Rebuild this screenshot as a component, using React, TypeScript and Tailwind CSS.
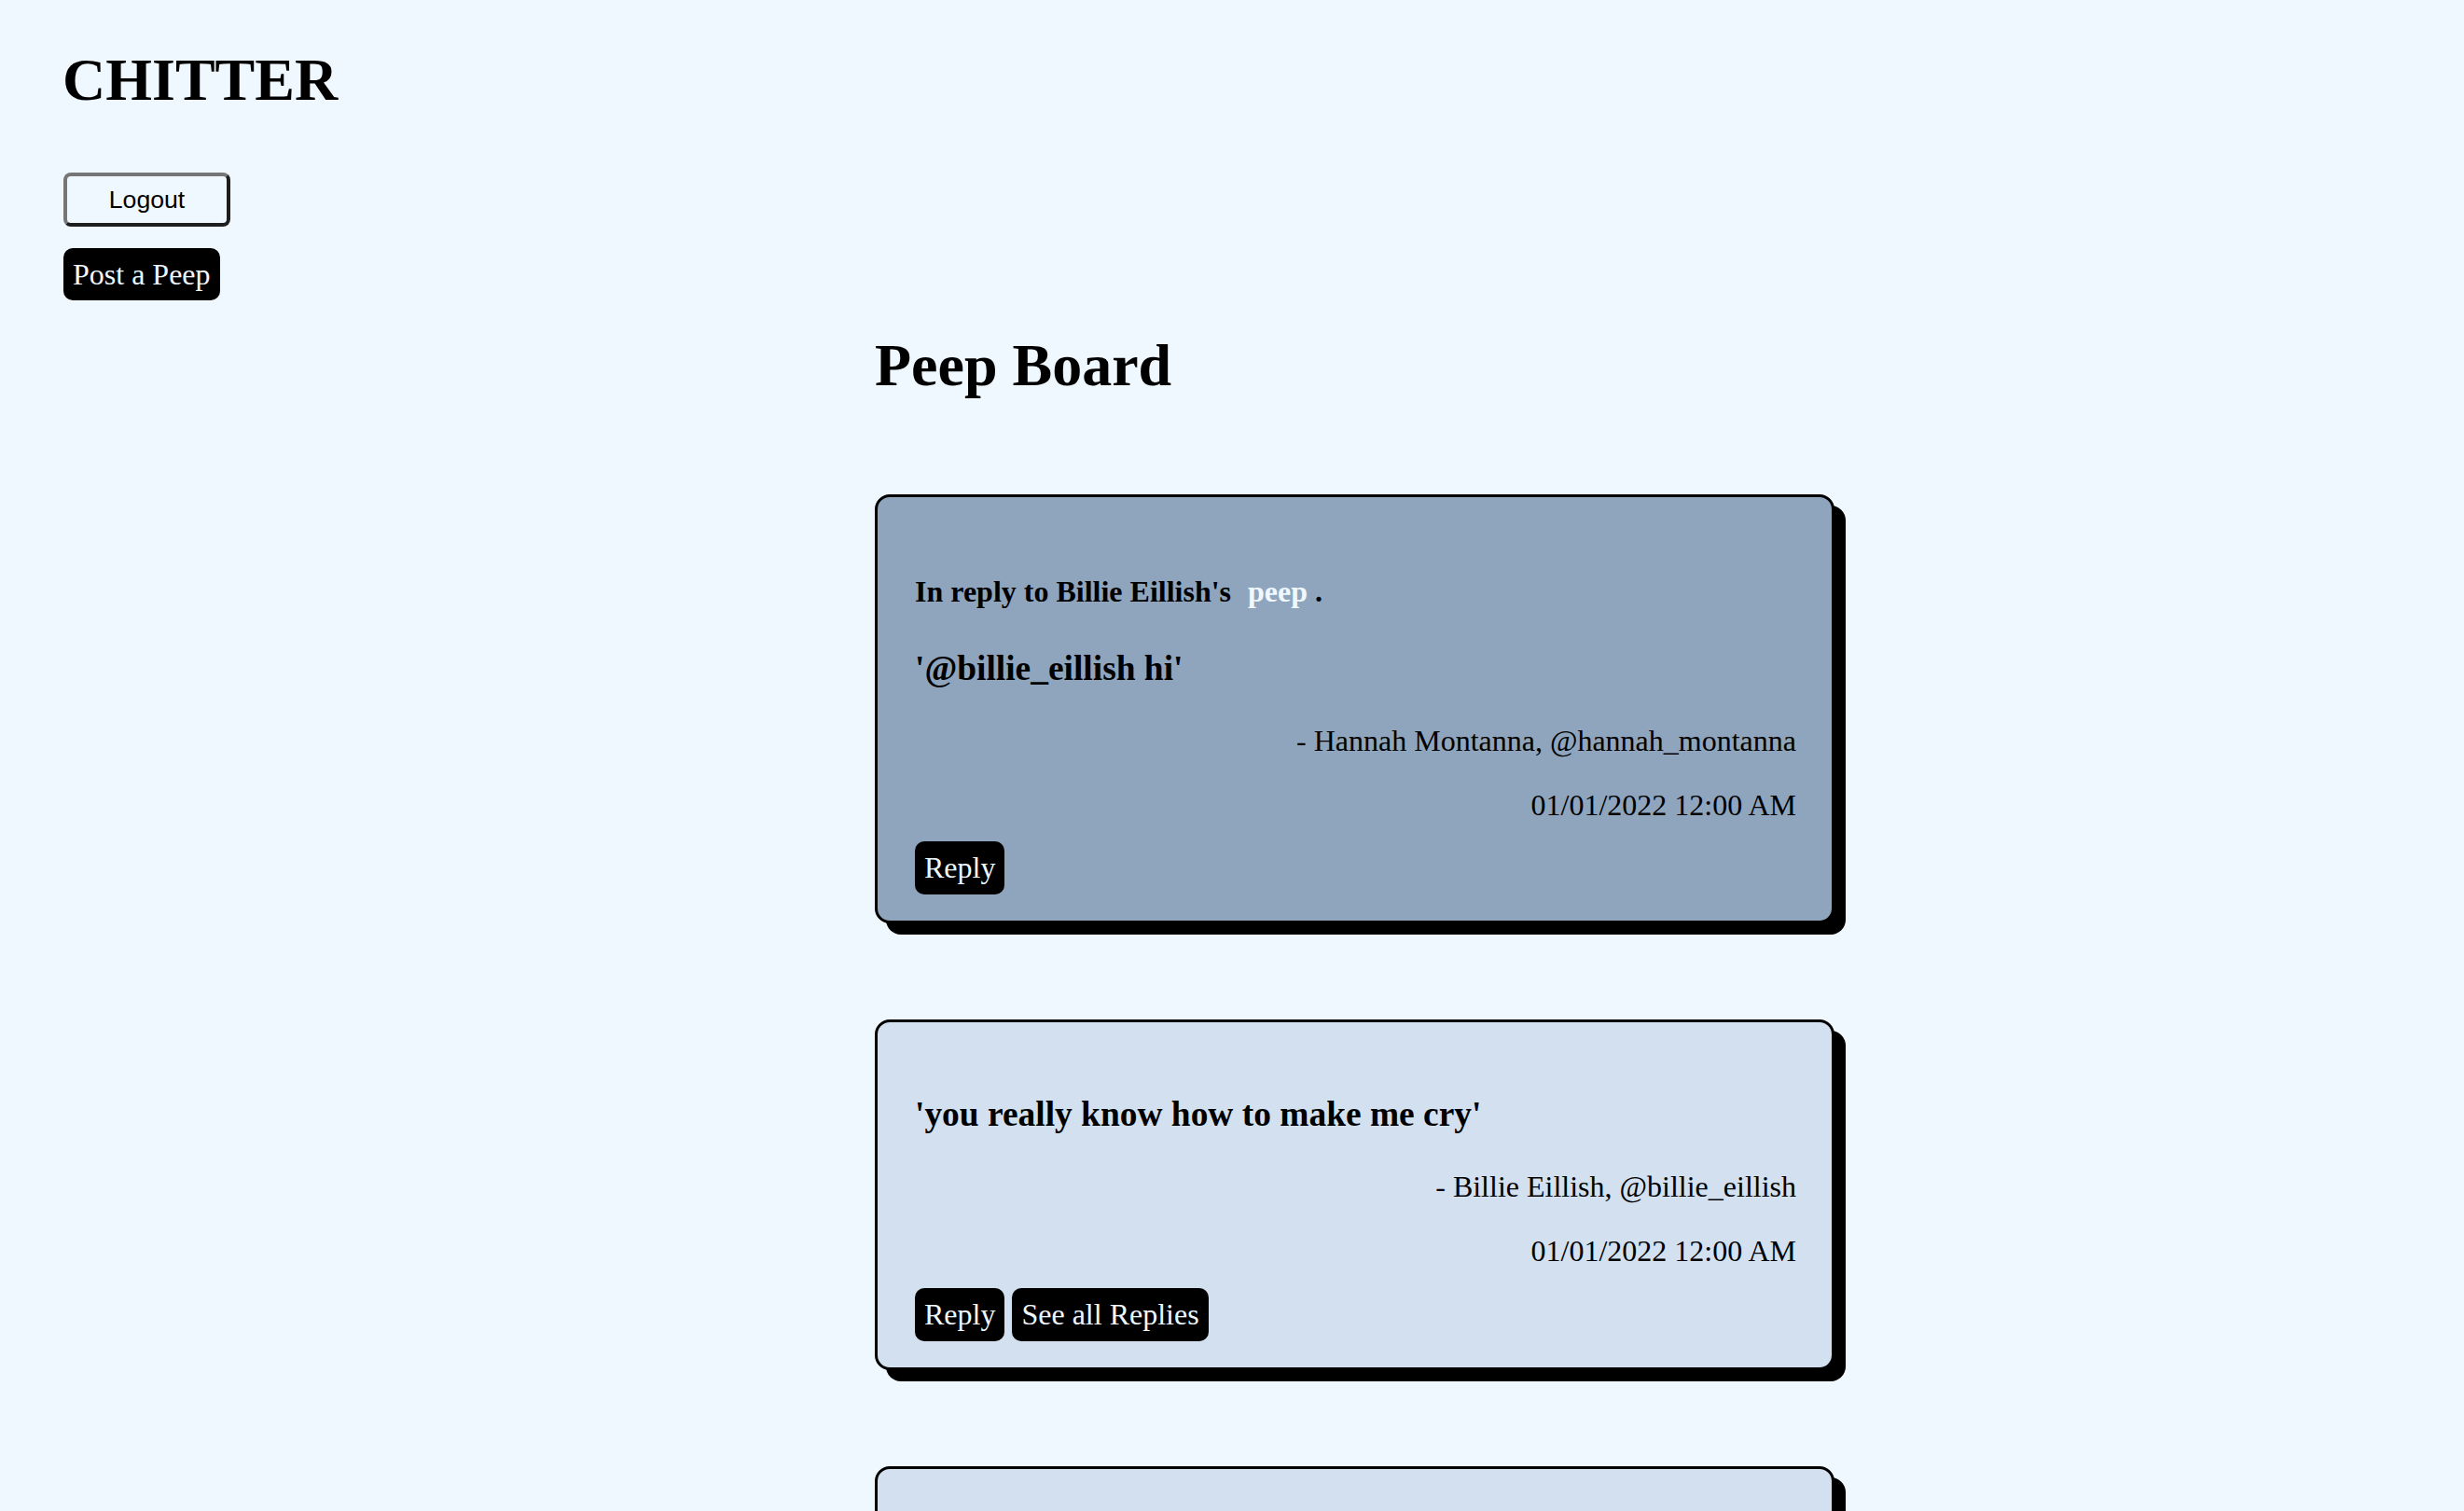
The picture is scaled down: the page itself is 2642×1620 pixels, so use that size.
import React from "react";

type Peep = {
  id: number;
  replyTo?: string;
  body: string;
  author: string;
  handle: string;
  date: string;
  hasReplies: boolean;
};

const peeps: Peep[] = [
  {
    id: 3,
    replyTo: "Billie Eillish",
    body: "@billie_eillish hi",
    author: "Hannah Montanna",
    handle: "hannah_montanna",
    date: "01/01/2022 12:00 AM",
    hasReplies: false,
  },
  {
    id: 2,
    body: "you really know how to make me cry",
    author: "Billie Eillish",
    handle: "billie_eillish",
    date: "01/01/2022 12:00 AM",
    hasReplies: true,
  },
  {
    id: 1,
    body: "when the party's over",
    author: "Billie Eillish",
    handle: "billie_eillish",
    date: "01/01/2022 12:00 AM",
    hasReplies: false,
  },
];

const blackButton =
  "bg-black text-[#f0f8ff] text-[32px] leading-[1.15] px-[10px] py-[10px] rounded-[10px] cursor-pointer";

function PeepCard({ peep }: { peep: Peep }) {
  const isReply = !!peep.replyTo;
  return (
    <div
      className={`w-[1029px] border-[3px] border-black rounded-[16px] shadow-[12px_12px_0_#000] pl-[40px] pr-[38px] pt-[40px] pb-[28px] ${
        isReply ? "bg-[#8ea5bd]" : "bg-[#d3e0f0]"
      }`}
    >
      {isReply && (
        <h4 className="mt-[43px] text-[32px] font-bold">
          In reply to {peep.replyTo}'s{" "}
          <a className="ml-[10px] text-[#f0f8ff] cursor-pointer">peep</a> .
        </h4>
      )}
      <h3 className={`${isReply ? "mt-[42px]" : "mt-[37px]"} text-[37.44px] font-bold`}>
        '{peep.body}'
      </h3>
      <p className="mt-[38px] text-[32px] text-right">
        - {peep.author}, @{peep.handle}
      </p>
      <p className="mt-[32px] text-[32px] text-right">{peep.date}</p>
      <div className="mt-[21px] flex gap-[8px]">
        <button className={blackButton}>Reply</button>
        {peep.hasReplies && <button className={blackButton}>See all Replies</button>}
      </div>
    </div>
  );
}

export default function App() {
  return (
    <div className="min-h-screen bg-[#f0f8ff] text-black font-['Liberation_Serif',serif] leading-[1.15] pt-[49px] pb-[120px]">
      {/* nav */}
      <div className="pl-[68px] flex flex-col items-start">
        <h1 className="text-[64px] font-bold leading-[1.15] -ml-[1px]">CHITTER</h1>
        <button className="mt-[62px] w-[179px] h-[58px] rounded-[8px] border-[4px] border-t-[#767676] border-l-[#767676] border-r-[#1e1e1e] border-b-[#1e1e1e] bg-transparent font-['Liberation_Sans',Arial,sans-serif] text-[26.67px] leading-none text-black cursor-pointer pt-[2px]">
          Logout
        </button>
        <button className={`mt-[23px] ${blackButton}`}>Post a Peep</button>
      </div>

      {/* board */}
      <div className="ml-[938px] mt-[33px]">
        <h2 className="text-[64px] font-bold leading-[1.15]">Peep Board</h2>
        <div className="mt-[101px] flex flex-col gap-[103px]">
          {peeps.map((peep) => (
            <PeepCard key={peep.id} peep={peep} />
          ))}
        </div>
      </div>
    </div>
  );
}
